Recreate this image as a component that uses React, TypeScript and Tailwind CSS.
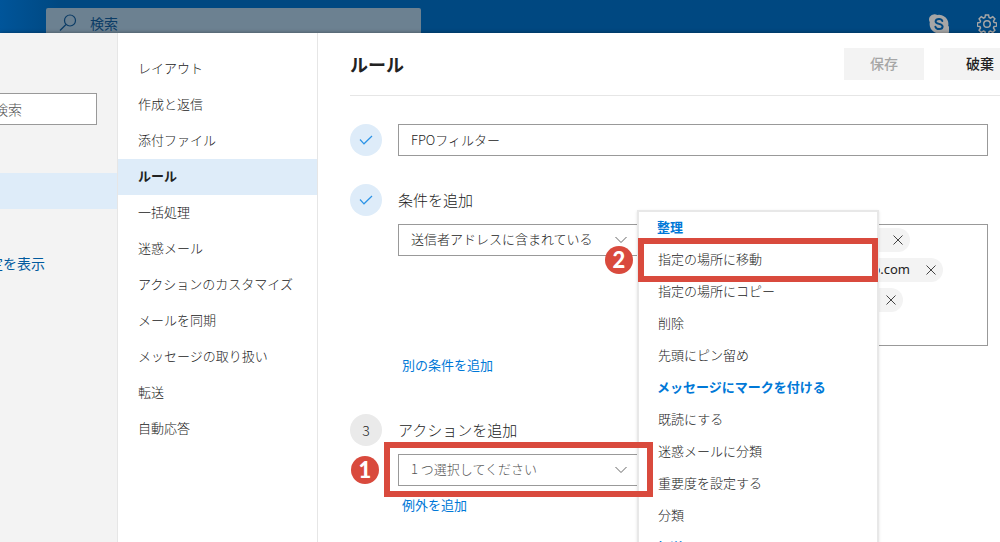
import { useState, type ReactNode } from 'react';

const navItems = [
    'レイアウト',
    '作成と返信',
    '添付ファイル',
    'ルール',
    '一括処理',
    '迷惑メール',
    'アクションのカスタマイズ',
    'メールを同期',
    'メッセージの取り扱い',
    '転送',
    '自動応答',
];

const actionGroups = [
    { title: '整理', actions: ['指定の場所に移動', '指定の場所にコピー', '削除', '先頭にピン留め'] },
    { title: 'メッセージにマークを付ける', actions: ['既読にする', '迷惑メールに分類', '重要度を設定する', '分類'] },
    { title: '転送', actions: [] },
];

function TopBar() {
    return (
        <header className="flex h-[33px] shrink-0 items-start overflow-hidden bg-linear-to-r from-[#00559a] to-[#004881] to-6% pl-[46px]">
            <label className="mt-2 flex h-[30px] w-[375px] items-center gap-3 rounded-t-xs bg-[#6c8191] pl-3 text-[#0b3c66]">
                <svg viewBox="0 0 20 20" className="size-5 shrink-0" fill="none" stroke="currentColor" strokeWidth="1.2">
                    <circle cx="12" cy="7.500" r="5.500" />
                    <path d="M8 11.500 2 17.500" />
                </svg>
                <input
                    type="search"
                    placeholder="検索"
                    aria-label="検索"
                    className="min-w-0 flex-1 bg-transparent text-sm font-normal outline-none placeholder:text-[#0b3c66]"
                />
            </label>
            <div className="mt-[14px] ml-auto flex shrink-0 gap-7 pr-[3px] text-[#a6a6a6]">
                <button type="button" aria-label="Skype">
                    <svg viewBox="0 0 20 20" className="size-5">
                        <path
                            fill="currentColor"
                            d="M5.500.2A5.300 5.300 0 0 0 .8 8.200 9.300 9.300 0 0 0 11.600 19.200 5.300 5.300 0 0 0 19.200 11.800 9.300 9.300 0 0 0 8.300.9 5.300 5.300 0 0 0 5.500.2z"
                        />
                        <path
                            fill="none"
                            stroke="#004881"
                            strokeWidth="2"
                            strokeLinecap="round"
                            d="M13.300 7C12.800 5.500 11.500 4.900 10 4.900c-2 0-3.400 1-3.400 2.500 0 3.300 7 1.600 7 5.100 0 1.600-1.500 2.600-3.500 2.600-1.900 0-3.200-.8-3.700-2.400"
                        />
                    </svg>
                </button>
                <button type="button" aria-label="設定">
                    <svg viewBox="1 1 22 22" className="size-5" fill="none" stroke="currentColor" strokeWidth="1.6">
                        <path d="M10.300 2h3.400l.6 2.900 1.500.6 2.500-1.600 2.400 2.400-1.600 2.500.6 1.500 2.900.6v3.400l-2.900.6-.6 1.500 1.600 2.500-2.400 2.400-2.500-1.600-1.500.6-.6 2.900h-3.400l-.6-2.900-1.500-.6-2.500 1.600-2.400-2.400 1.600-2.500-.6-1.500-2.900-.6v-3.400l2.900-.6.6-1.500-1.600-2.500 2.400-2.400 2.500 1.600 1.500-.6z" />
                        <circle cx="12" cy="12" r="3.600" />
                    </svg>
                </button>
            </div>
        </header>
    );
}

function CategoryPane() {
    return (
        <aside className="flex w-[118px] shrink-0 justify-end overflow-hidden border-r border-[#e6e6e6] bg-[#f3f3f3]">
            <div className="w-[200px] shrink-0 pt-15">
                <div className="px-5">
                    <input
                        type="text"
                        placeholder="設定を検索"
                        aria-label="設定を検索"
                        className="h-8 w-full border border-[#999] bg-white px-[14px] text-sm outline-none placeholder:text-[#555]"
                    />
                </div>
                <div className="mt-12 h-9 bg-[#deecf9]" />
                <a
                    href="#all"
                    className="mt-11 block pr-[72px] text-right text-sm font-normal whitespace-nowrap text-[#005a9e]"
                >
                    設定を表示
                </a>
            </div>
        </aside>
    );
}

function SettingsNav() {
    return (
        <nav className="w-[200px] shrink-0 border-r border-[#e6e6e6] pt-[18px]">
            {navItems.map(item => (
                <a
                    key={item}
                    href={`#${item}`}
                    className={
                        item === 'ルール'
                            ? 'flex h-9 items-center bg-[#deecf9] pb-[2px] pl-5 font-bold'
                            : 'flex h-9 items-center pb-[2px] pl-5'
                    }
                >
                    {item}
                </a>
            ))}
        </nav>
    );
}

function Step({ number, done, children }: { number: number; done?: boolean; children: ReactNode }) {
    return (
        <section className="flex gap-4">
            {done ? (
                <span className="flex size-8 shrink-0 items-center justify-center rounded-full bg-[#deecf9]">
                    <svg viewBox="0 0 14 10" className="h-[10px] w-[14px]" fill="none" stroke="#2b93e6" strokeWidth="1.2">
                        <path d="M1 4.500 5 8.800 13 1" />
                    </svg>
                </span>
            ) : (
                <span className="flex size-8 shrink-0 items-center justify-center rounded-full bg-[#eaeaea] text-sm">
                    {number}
                </span>
            )}
            <div className="min-w-0 flex-1">{children}</div>
        </section>
    );
}

function SelectBox({ label, options, muted }: { label: string; options: string[]; muted?: boolean }) {
    return (
        <div className="relative w-60 shrink-0">
            <select
                aria-label={label}
                className={
                    muted
                        ? 'h-8 w-full appearance-none border border-[#999] bg-white pr-8 pb-[2px] pl-3 text-[#555] outline-none'
                        : 'h-8 w-full appearance-none border border-[#999] bg-white pr-8 pb-[2px] pl-3 outline-none'
                }
            >
                {options.map(option => (
                    <option key={option}>{option}</option>
                ))}
            </select>
            <svg
                viewBox="0 0 12 8"
                className="pointer-events-none absolute top-3 right-[11px] h-2 w-3"
                fill="none"
                stroke="#666"
            >
                <path d="M.5 1 6 6.500 11.500 1" />
            </svg>
        </div>
    );
}

function AddressChip({ address, className }: { address?: string; className: string }) {
    return (
        <li className={`flex h-6 items-center justify-end gap-4 rounded-full bg-[#f3f3f3] pr-[7px] ${className}`}>
            <span className="font-['Noto_Sans',sans-serif] text-[13px] font-normal">{address}</span>
            <button type="button" aria-label="削除">
                <svg viewBox="0 0 10 10" className="size-[10px]" fill="none" stroke="#444">
                    <path d="M.5.5l9 9M9.500.5l-9 9" />
                </svg>
            </button>
        </li>
    );
}

function ActionMenu() {
    return (
        <div
            role="menu"
            className="absolute top-[177px] left-[319px] flex w-[242px] flex-col border-2 border-[#e8e8e8] bg-white shadow-sm"
        >
            {actionGroups.map(group => (
                <div key={group.title} role="group" aria-label={group.title}>
                    <h3 className="flex h-8 items-center pb-[2px] pl-[18px] font-bold text-[#0078d7]">{group.title}</h3>
                    {group.actions.map(action => (
                        <button
                            key={action}
                            type="button"
                            role="menuitem"
                            className="flex h-8 w-full items-center pb-[2px] pl-[19px]"
                        >
                            {action}
                        </button>
                    ))}
                </div>
            ))}
        </div>
    );
}

function Callout({ number, className }: { number: number; className: string }) {
    return (
        <span
            className={`absolute flex size-7 items-center justify-center rounded-full bg-[#d94a3d] font-['Lato',sans-serif] text-[22px] leading-none font-black text-white ${className}`}
        >
            {number}
        </span>
    );
}

function RuleEditor() {
    const [name, setName] = useState('FPOフィルター');

    return (
        <main className="relative min-w-0 flex-1 pl-8">
            <div className="-mr-5 flex h-[63px] items-center gap-4 border-b border-[#e6e6e6]">
                <h1 className="flex-1 text-lg font-bold">ルール</h1>
                <button type="button" disabled className="h-8 w-20 bg-[#f3f3f3] pb-[2px] text-sm font-medium text-[#a6a6a6]">
                    保存
                </button>
                <button type="button" className="h-8 w-20 bg-[#f3f3f3] pb-[2px] text-sm font-medium">
                    破棄
                </button>
            </div>

            <div className="flex flex-col gap-7 pt-7 pr-3">
                <Step number={1} done>
                    <input
                        type="text"
                        aria-label="ルールの名前"
                        value={name}
                        onChange={e => setName(e.target.value)}
                        className="h-8 w-full border border-[#999] px-3 pb-[2px] outline-none"
                    />
                </Step>

                <Step number={2} done>
                    <h2 className="flex h-8 items-center text-[15px]">条件を追加</h2>
                    <div className="mt-2 flex gap-2">
                        <SelectBox label="条件" options={['送信者アドレスに含まれている']} />
                        <ul className="flex h-[122px] flex-1 flex-col gap-[6px] border border-[#999] p-[3px]">
                            <AddressChip className="w-[260px]" />
                            <AddressChip address="fpo.com" className="w-[293px]" />
                            <AddressChip className="w-[253px]" />
                        </ul>
                    </div>
                    <div className="flex h-10 items-center pb-[2px] pl-1">
                        <a href="#condition" className="font-normal text-[#0078d7]">
                            別の条件を追加
                        </a>
                    </div>
                </Step>

                <Step number={3}>
                    <h2 className="flex h-8 items-center text-[15px]">アクションを追加</h2>
                    <div className="mt-2">
                        <SelectBox label="アクション" options={['1 つ選択してください']} muted />
                    </div>
                    <div className="flex h-10 items-center pb-[2px] pl-1">
                        <a href="#exception" className="font-normal text-[#0078d7]">
                            例外を追加
                        </a>
                    </div>
                </Step>
            </div>

            <ActionMenu />

            <div className="pointer-events-none absolute top-[409px] left-[66px] h-[55px] w-[269px] border-6 border-[#d94a3d]" />
            <Callout number={1} className="top-[423px] left-[33px]" />
            <div className="pointer-events-none absolute top-[205px] left-[320px] h-11 w-60 border-6 border-[#d94a3d]" />
            <Callout number={2} className="top-[213px] left-[287px]" />
        </main>
    );
}

export default function App() {
    return (
        <div className="flex h-screen flex-col overflow-hidden bg-white font-['Noto_Sans_CJK_JP',sans-serif] text-[13px] font-light text-[#222]">
            <TopBar />
            <div className="flex min-h-0 flex-1 overflow-hidden bg-white shadow-[0_0_4px_rgba(0,0,0,0.4)]">
                <CategoryPane />
                <SettingsNav />
                <RuleEditor />
            </div>
        </div>
    );
}
